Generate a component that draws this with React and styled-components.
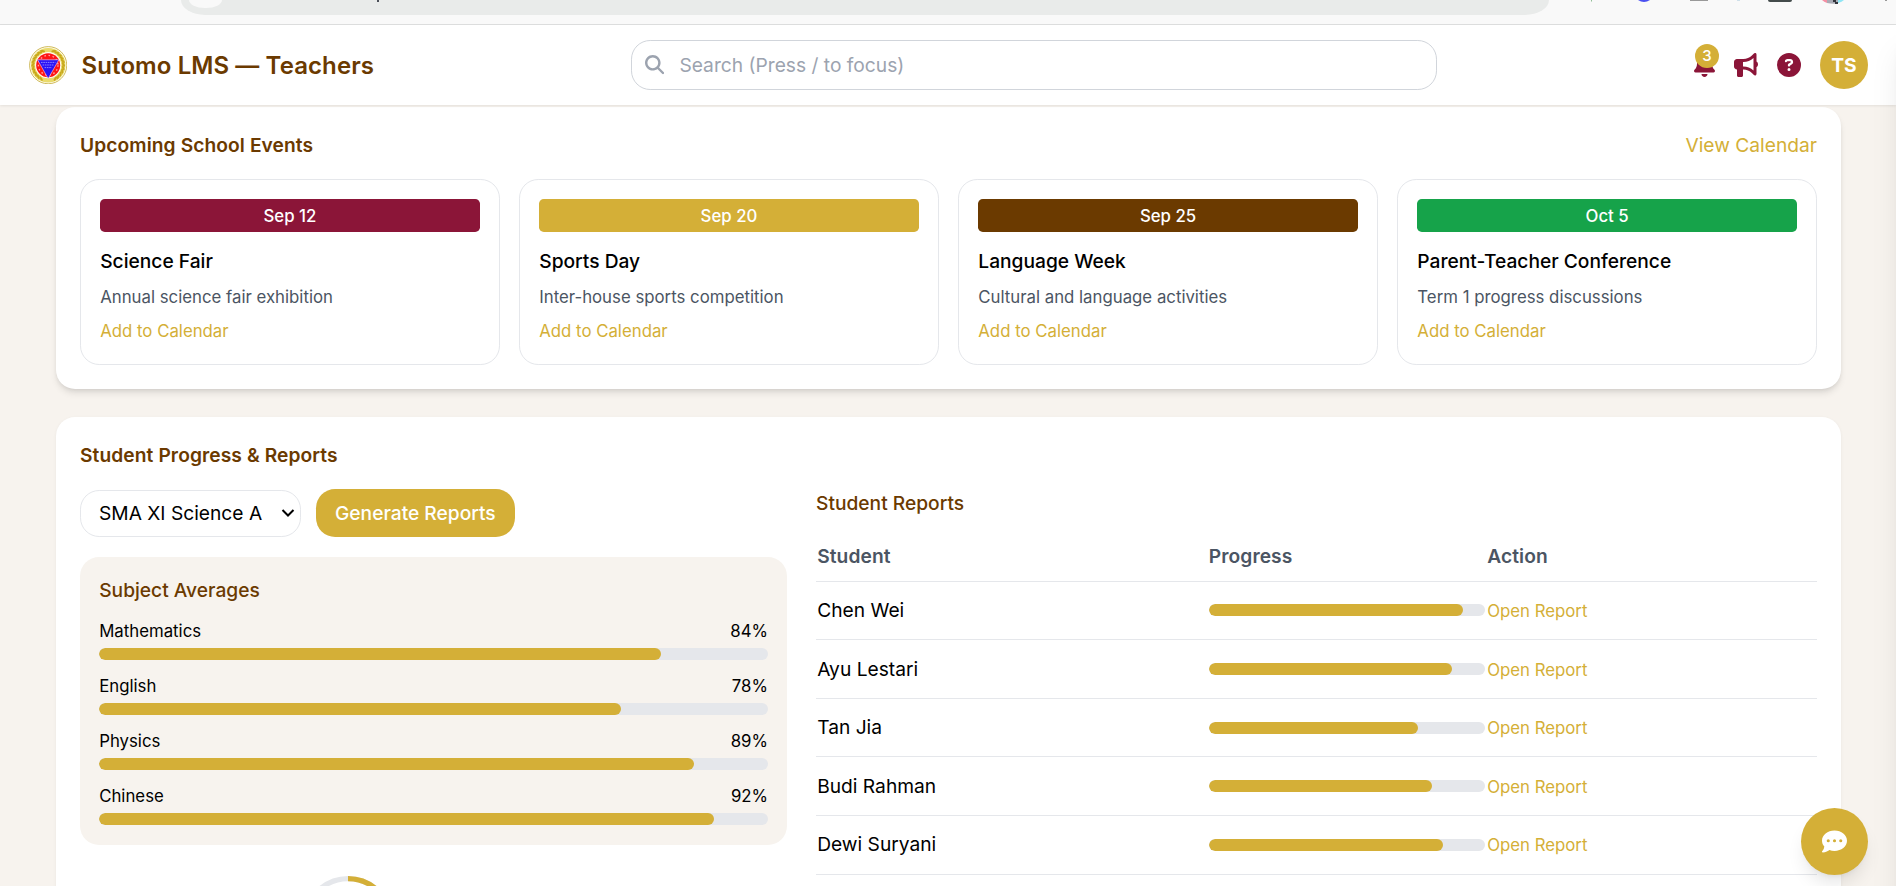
import React from 'react';
import styled, { createGlobalStyle } from 'styled-components';
import { FaBell, FaBullhorn, FaCircleQuestion, FaCommentDots, FaMagnifyingGlass } from 'react-icons/fa6';

const gold = '#d4af37';
const maroon = '#8b1538';
const brown = '#6b3a00';
const cream = '#f7f3ee';
const line = '#e5e7eb';

const Global = createGlobalStyle`
  *, *::before, *::after { box-sizing: border-box; }
  html, body { margin: 0; height: 886px; overflow: hidden; }
  body {
    background: ${cream};
    font-family: Inter, "Liberation Sans", sans-serif;
    font-size: 19.2px;
    line-height: 28.8px;
    color: #000;
  }
  h1, h2, h3, p { margin: 0; font-size: inherit; font-weight: inherit; }
  button, input, select { font: inherit; color: inherit; }
  button { border: 0; background: none; padding: 0; }
  svg { display: block; }
`;

const Page = styled.div`
  display: flex;
  flex-direction: column;
  height: 886px;
  overflow: hidden;
`;

const BrowserStrip = styled.div`
  flex: none;
  display: flex;
  align-items: flex-start;
  height: 25px;
  padding-left: 181px;
  background: #f9f9f9;
  border-bottom: 1px solid #dedfdf;
`;

const AddressBar = styled.div`
  display: flex;
  gap: 155px;
  width: 1368px;
  height: 15px;
  padding-left: 8px;
  border-radius: 0 0 24px 24px / 0 0 15px 15px;
  background: #e9ebea;
`;

const SiteChip = styled.div`
  width: 33px;
  height: 8px;
  border-radius: 0 0 16px 16px / 0 0 8px 8px;
  background: #f9f9f9;
`;

const UrlMark = styled.div`
  width: 2px;
  height: 2px;
  background: #4b4f58;
`;

const ExtensionMarks = styled.svg`
  width: 347px;
  height: 5px;
`;

const Header = styled.header`
  flex: none;
  position: relative;
  z-index: 1;
  display: flex;
  align-items: center;
  justify-content: space-between;
  height: 80px;
  padding: 0 28px 0 28.8px;
  background: #fff;
  box-shadow: 0 1.2px 2.4px rgba(0, 0, 0, 0.08);
`;

const Brand = styled.div`
  display: flex;
  align-items: center;
  gap: 14.4px;
`;

const BrandName = styled.h1`
  padding-top: 1px;
  font-size: 24px;
  line-height: 33.6px;
  font-weight: 600;
  letter-spacing: 0.09px;
  color: ${brown};
`;

const SearchBox = styled.label`
  display: flex;
  align-items: center;
  gap: 15.4px;
  width: 806.4px;
  height: 50px;
  padding: 0 13px;
  border: 1px solid #d1d5db;
  border-radius: 19.2px;
  color: #9ca3af;
`;

const SearchInput = styled.input`
  flex: 1;
  padding: 0;
  border: 0;
  outline: 0;
  background: none;
  &::placeholder { color: #9ca3af; opacity: 1; }
`;

const Actions = styled.div`
  display: flex;
  align-items: center;
  gap: 19.2px;
  color: ${maroon};
`;

const IconButton = styled.button`
  position: relative;
  display: flex;
  & + & { margin-left: -0.3px; }
`;

const Badge = styled.span`
  position: absolute;
  top: -9.4px;
  right: -4px;
  width: 24px;
  height: 24px;
  border-radius: 50%;
  background: ${gold};
  color: #fff;
  font-size: 15px;
  line-height: 24px;
  font-weight: 500;
  text-align: center;
`;

const Avatar = styled.div`
  width: 48px;
  height: 48px;
  border-radius: 50%;
  background: ${gold};
  color: #fff;
  font-weight: 700;
  line-height: 48px;
  text-align: center;
`;

const Main = styled.main`
  flex: 1;
  display: flex;
  flex-direction: column;
  gap: 28.6px;
  min-height: 0;
  padding: 1.6px 55px 0 56px;
`;

const Card = styled.section`
  flex: none;
  padding: 24px;
  border-radius: 19.2px;
  background: #fff;
  box-shadow: ${(p) =>
    p.$raised
      ? '0 4.8px 7.2px -1.2px rgba(0,0,0,.1), 0 2.4px 4.8px -2.4px rgba(0,0,0,.1)'
      : '0 1.2px 3.6px rgba(0,0,0,.06)'};
`;

const CardHeader = styled.div`
  display: flex;
  justify-content: space-between;
  margin-bottom: 19.2px;
`;

const CardTitle = styled.h2`
  font-weight: 600;
  letter-spacing: 0.09px;
  color: ${brown};
`;

const SubTitle = styled.h3`
  margin-bottom: ${(p) => p.$gap}px;
  font-weight: 500;
  color: ${brown};
`;

const Link = styled.a`
  color: ${gold};
  font-size: ${(p) => (p.$small ? '16.8px' : '19.2px')};
  line-height: ${(p) => (p.$small ? '24px' : '28.8px')};
`;

const EventGrid = styled.div`
  display: grid;
  grid-template-columns: repeat(4, 1fr);
  gap: 19.2px;
`;

const EventCard = styled.article`
  display: flex;
  flex-direction: column;
  height: 186px;
  padding: 19.2px;
  border: 1px solid ${line};
  border-radius: 19.2px;
`;

const EventDate = styled.div`
  margin-bottom: 14.4px;
  padding: 4.8px;
  border-radius: 4.8px;
  background: ${(p) => p.$color};
  color: #fff;
  font-size: 16.8px;
  line-height: 24px;
  font-weight: 500;
  text-align: center;
`;

const EventName = styled.h3`
  font-weight: 500;
`;

const EventText = styled.p`
  margin: 9.4px 0 9.8px;
  color: #4b5563;
  font-size: 16.8px;
  line-height: 24px;
`;

const ReportLayout = styled.div`
  display: grid;
  grid-template-columns: 707.2px 1fr;
  gap: 28.8px;
`;

const Controls = styled.div`
  display: flex;
  align-items: center;
  gap: 14.8px;
  margin-bottom: 19.4px;
`;

const ClassSelect = styled.div`
  display: flex;
  align-items: center;
  justify-content: space-between;
  width: 221px;
  height: 47px;
  padding: 0 5px 0 18px;
  border: 1px solid ${line};
  border-radius: 19.2px;
`;

const PrimaryButton = styled.button`
  height: 48px;
  padding: 0 19.2px;
  border-radius: 19.2px;
  background: ${gold};
  color: #fff;
  font-weight: 500;
`;

const AveragesPanel = styled.div`
  padding: 19.2px 19.2px 19.6px;
  border-radius: 19.2px;
  background: ${cream};
`;

const Averages = styled.div`
  display: flex;
  flex-direction: column;
  gap: 14.4px;
`;

const AverageLabel = styled.div`
  display: flex;
  justify-content: space-between;
  margin-bottom: 4.8px;
  font-size: 16.8px;
  line-height: 24px;
`;

const Track = styled.div`
  height: 12px;
  border-radius: 6px;
  background: ${line};
  overflow: hidden;
`;

const Fill = styled.div`
  height: 100%;
  border-radius: 6px;
  background: ${gold};
`;

const Ring = styled.svg`
  margin: 28.4px 0 0 220px;
`;

const TableRow = styled.div`
  display: grid;
  grid-template-columns: 391.6px 278.4px 1fr;
  align-items: center;
  padding: ${(p) => (p.$head ? '9.6px 0' : '14.4px 0')};
  border-bottom: 1px solid ${line};
  height: ${(p) => (p.$head ? '49px' : '58.6px')};
  color: ${(p) => (p.$head ? '#4b5563' : '#000')};
  font-weight: ${(p) => (p.$head ? 600 : 400)};
  letter-spacing: ${(p) => (p.$head ? '0.09px' : 'normal')};
`;

const Cell = styled.div`
  padding: 0 1.2px;
`;

const ChatButton = styled.button`
  position: fixed;
  right: 28px;
  bottom: 11px;
  z-index: 2;
  display: flex;
  align-items: center;
  justify-content: center;
  width: 67.2px;
  height: 67.2px;
  border-radius: 50%;
  background: ${gold};
  color: #fff;
  box-shadow: 0 12px 18px -3.6px rgba(0, 0, 0, 0.1), 0 4.8px 7.2px -4.8px rgba(0, 0, 0, 0.1);
`;

const Drawer = styled.aside`
  position: fixed;
  top: 25px;
  bottom: -60px;
  left: 100%;
  z-index: 3;
  width: 384px;
  box-shadow: 0 24px 30px -6px rgba(0, 0, 0, 0.1), 0 9.6px 12px -7.2px rgba(0, 0, 0, 0.1);
  clip-path: inset(0 0 0 -40px);
`;

const events = [
  { date: 'Sep 12', color: maroon, name: 'Science Fair', text: 'Annual science fair exhibition' },
  { date: 'Sep 20', color: gold, name: 'Sports Day', text: 'Inter-house sports competition' },
  { date: 'Sep 25', color: brown, name: 'Language Week', text: 'Cultural and language activities' },
  { date: 'Oct 5', color: '#16a34a', name: 'Parent-Teacher Conference', text: 'Term 1 progress discussions' },
];

const averages = [
  ['Mathematics', 84],
  ['English', 78],
  ['Physics', 89],
  ['Chinese', 92],
];

const students = [
  ['Chen Wei', 92],
  ['Ayu Lestari', 88],
  ['Tan Jia', 75.7],
  ['Budi Rahman', 80.7],
  ['Dewi Suryani', 84.8],
];

const leaves = Array.from({ length: 11 }, (_, i) => 28 + i * 13);

function SchoolLogo() {
  return (
    <svg width="38.4" height="38.4" viewBox="0 0 38.4 38.4">
      <circle cx="19.2" cy="19.2" r="18.6" fill="#fffdf0" stroke="#c9b24a" strokeWidth="0.9" />
      <circle cx="19.2" cy="19.2" r="15.2" fill="none" stroke="#eadb6c" strokeWidth="4.2" />
      {leaves.map((a) => (
        <g key={a} fill="#c9a91c">
          <ellipse cx="19.2" cy="34.4" rx="2.6" ry="1.1" transform={`rotate(${a} 19.2 19.2) rotate(28 19.2 34.4)`} />
          <ellipse cx="19.2" cy="34.4" rx="2.6" ry="1.1" transform={`rotate(${-a} 19.2 19.2) rotate(-28 19.2 34.4)`} />
        </g>
      ))}
      <circle cx="19.2" cy="19.2" r="12" fill="#ff1414" />
      <circle cx="19.2" cy="19.2" r="9.8" fill="none" stroke="#ff9d9d" strokeWidth="1.4" strokeDasharray="1.6 2.6" />
      <path d="M8.500 13.800h21.400L19.200 32.600z" fill="#2a12f5" stroke="#ffd0e0" strokeWidth="0.6" />
      <path d="M12 16.4h14.4M13.6 19h11.2M15.6 21.6h7.2" stroke="#8d84ff" strokeWidth="1" strokeDasharray="1.6 .7" />
    </svg>
  );
}

function Progress({ value }) {
  return (
    <Track>
      <Fill style={{ width: `${value}%` }} />
    </Track>
  );
}

export default function App() {
  return (
    <>
      <Global />
      <Page>
        <BrowserStrip>
          <AddressBar>
            <SiteChip />
            <UrlMark />
          </AddressBar>
          <ExtensionMarks viewBox="0 0 347 5">
            <path d="M42.500 0v1.500" stroke="#8fbf95" />
            <path d="M89 0h12q-6 4-12 0" fill="#4a50f0" />
            <path d="M141 .5h18" stroke="#999" />
            <path d="M188 .5h3" stroke="#cfe0ea" />
            <path d="M219 0h24q0 2-2 2h-20q-2 0-2-2" fill="#444c4c" />
            <path d="M273 0h5v3q-3-1-5-3" fill="#f590a4" />
            <path d="M278 0h11v3.500q-6 .5-11-.5" fill="#a9abb5" />
            <path d="M284 0h3v2h-3zM286 2h3v2h-3z" fill="#33363c" />
            <path d="M289 0h6q-2 2-6 3" fill="#8fe6f5" />
            <path d="M337 0v1" stroke="#999" strokeWidth="2" />
          </ExtensionMarks>
        </BrowserStrip>
        <Header>
          <Brand>
            <SchoolLogo />
            <BrandName>Sutomo LMS — Teachers</BrandName>
          </Brand>
          <SearchBox>
            <FaMagnifyingGlass size={19.2} />
            <SearchInput placeholder="Search (Press / to focus)" />
          </SearchBox>
          <Actions>
            <IconButton>
              <FaBell style={{ width: 21, height: 24 }} />
              <Badge>3</Badge>
            </IconButton>
            <IconButton>
              <FaBullhorn size={24} />
            </IconButton>
            <IconButton>
              <FaCircleQuestion size={24} />
            </IconButton>
            <Avatar>TS</Avatar>
          </Actions>
        </Header>
        <Main>
          <Card $raised>
            <CardHeader>
              <CardTitle>Upcoming School Events</CardTitle>
              <Link>View Calendar</Link>
            </CardHeader>
            <EventGrid>
              {events.map((e) => (
                <EventCard key={e.date}>
                  <EventDate $color={e.color}>{e.date}</EventDate>
                  <EventName>{e.name}</EventName>
                  <EventText>{e.text}</EventText>
                  <Link $small>Add to Calendar</Link>
                </EventCard>
              ))}
            </EventGrid>
          </Card>
          <Card>
            <CardHeader>
              <CardTitle>Student Progress &amp; Reports</CardTitle>
            </CardHeader>
            <ReportLayout>
              <div>
                <Controls>
                  <ClassSelect>
                    SMA XI Science A
                    <svg width="14" height="10" viewBox="0 0 14 10" fill="none" stroke="#000" strokeWidth="2">
                      <path d="M1.500 2 7 7.500 12.500 2" />
                    </svg>
                  </ClassSelect>
                  <PrimaryButton>Generate Reports</PrimaryButton>
                </Controls>
                <AveragesPanel>
                  <SubTitle $gap={14.35}>Subject Averages</SubTitle>
                  <Averages>
                    {averages.map(([name, value]) => (
                      <div key={name}>
                        <AverageLabel>
                          <span>{name}</span>
                          <span>{value}%</span>
                        </AverageLabel>
                        <Progress value={value} />
                      </div>
                    ))}
                  </Averages>
                </AveragesPanel>
                <Ring width="96" height="96" viewBox="0 0 96 96" fill="none" strokeWidth="5.33">
                  <circle cx="48" cy="48" r="42.4" stroke={line} />
                  <path d="M48 5.600a42.400 42.400 0 1 1-40.300 29.300" stroke={gold} />
                </Ring>
              </div>
              <div>
                <SubTitle $gap={14.65}>Student Reports</SubTitle>
                <TableRow $head>
                  <Cell>Student</Cell>
                  <Cell>Progress</Cell>
                  <Cell>Action</Cell>
                </TableRow>
                {students.map(([name, value]) => (
                  <TableRow key={name}>
                    <Cell>{name}</Cell>
                    <Cell>
                      <Progress value={value} />
                    </Cell>
                    <Cell>
                      <Link $small>Open Report</Link>
                    </Cell>
                  </TableRow>
                ))}
              </div>
            </ReportLayout>
          </Card>
        </Main>
      </Page>
      <ChatButton>
        <FaCommentDots size={25} />
      </ChatButton>
      <Drawer />
    </>
  );
}
